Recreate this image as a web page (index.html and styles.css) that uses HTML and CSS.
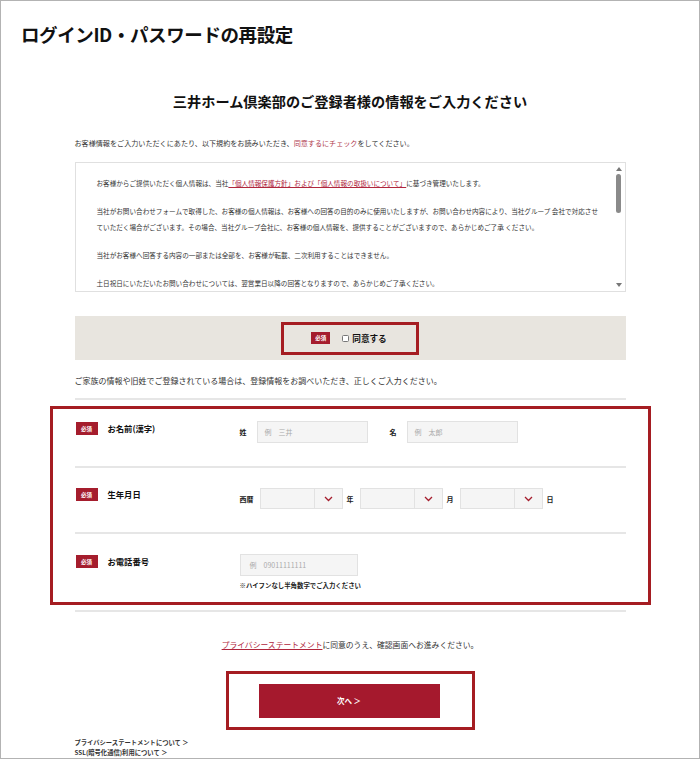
FILE: index.html
```html
<!DOCTYPE html>
<html lang="ja">
<head>
<meta charset="utf-8">
<title>ログインID・パスワードの再設定</title>
<link rel="stylesheet" href="styles.css">
</head>
<body>
<div class="frame">
  <h1 class="page-title">ログインID・パスワードの再設定</h1>
  <div class="content">
    <h2 class="lead">三井ホーム倶楽部のご登録者様の情報をご入力ください</h2>
    <p class="intro">お客様情報をご入力いただくにあたり、以下規約をお読みいただき、<span class="red">同意するにチェック</span>をしてください。</p>

    <div class="terms">
      <div class="terms-text">
        <p>お客様からご提供いただく個人情報は、当社<a class="ul">「個人情報保護方針」および「個人情報の取扱いについて」</a>に基づき管理いたします。</p>
        <p>当社がお問い合わせフォームで取得した、お客様の個人情報は、お客様への回答の目的のみに使用いたしますが、お問い合わせ内容により、当社グループ 会社で対応させていただく場合がございます。その場合、当社グループ会社に、お客様の個人情報を、提供することがございますので、あらかじめご了承 ください。</p>
        <p>当社がお客様へ回答する内容の一部または全部を、お客様が転載、二次利用することはできません。</p>
        <p>土日祝日にいただいたお問い合わせについては、翌営業日以降の回答となりますので、あらかじめご了承ください。</p>
      </div>
      <div class="sbar">
        <span class="arrow up"></span>
        <span class="track"><span class="thumb"></span></span>
        <span class="arrow down"></span>
      </div>
    </div>

    <div class="agree-band">
      <div class="agree-box">
        <span class="badge small">必須</span>
        <label class="agree-label"><span class="check"></span>同意する</label>
      </div>
    </div>

    <p class="family">ご家族の情報や旧姓でご登録されている場合は、登録情報をお調べいただき、正しくご入力ください。</p>
    <div class="rule"></div>

    <div class="form-box">
      <div class="row r1">
        <div class="row-head"><span class="badge">必須</span><span class="row-label">お名前(漢字)</span></div>
        <div class="fields">
          <span class="flabel">姓</span><span class="input w111">例　三井</span>
          <span class="flabel ml22">名</span><span class="input w111">例　太郎</span>
        </div>
      </div>
      <div class="row r2">
        <div class="row-head"><span class="badge">必須</span><span class="row-label">生年月日</span></div>
        <div class="fields">
          <span class="flabel">西暦</span>
          <span class="select"><span class="sel-body"></span><span class="sel-btn"><svg width="9" height="6" viewBox="0 0 9 6"><path d="M1 1 L4.5 4.5 L8 1" fill="none" stroke="#a51d2d" stroke-width="1.3"/></svg></span></span>
          <span class="flabel">年</span>
          <span class="select"><span class="sel-body"></span><span class="sel-btn"><svg width="9" height="6" viewBox="0 0 9 6"><path d="M1 1 L4.5 4.5 L8 1" fill="none" stroke="#a51d2d" stroke-width="1.3"/></svg></span></span>
          <span class="flabel">月</span>
          <span class="select"><span class="sel-body"></span><span class="sel-btn"><svg width="9" height="6" viewBox="0 0 9 6"><path d="M1 1 L4.5 4.5 L8 1" fill="none" stroke="#a51d2d" stroke-width="1.3"/></svg></span></span>
          <span class="flabel">日</span>
        </div>
      </div>
      <div class="row r3">
        <div class="row-head"><span class="badge">必須</span><span class="row-label">お電話番号</span></div>
        <div class="fields col">
          <span class="input w118">例　09011111111</span>
          <span class="note">※ハイフンなし半角数字でご入力ください</span>
        </div>
      </div>
    </div>
    <div class="rule rule2"></div>

    <p class="privacy"><a class="ul">プライバシーステートメント</a>に同意のうえ、確認画面へお進みください。</p>

    <div class="btn-wrap">
      <div class="btn-box"><span class="btn">次へ ＞</span></div>
    </div>

    <ul class="footer-links">
      <li>プライバシーステートメントについて ＞</li>
      <li>SSL(暗号化通信)利用について ＞</li>
    </ul>
  </div>
</div>
</body>
</html>
```

FILE: styles.css
```css
* { box-sizing: border-box; }
html, body { margin: 0; padding: 0; background: #fff; }
body {
  font-family: "Noto Sans CJK JP", "Noto Sans", sans-serif;
  color: #222;
}
.frame {
  width: 700px;
  height: 759px;
  border: 1px solid #b3b3b3;
  overflow: hidden;
}
.page-title {
  margin: 20px 0 0 20px;
  font-size: 18.5px;
  line-height: 26px;
  font-weight: 700;
  color: #111;
  letter-spacing: -0.4px;
}
.content {
  width: 551px;
  margin: 0 auto;
}
.lead {
  margin: 42px 0 0;
  text-align: center;
  font-size: 14.2px;
  line-height: 24px;
  font-weight: 700;
  color: #111;
}
.intro {
  margin: 24px 0 0;
  font-size: 7.1px;
  line-height: 12px;
  color: #333;
}
.red { color: #b03a4e; }
.ul { color: #b0263c; text-decoration: underline; }

.terms {
  margin-top: 13px;
  height: 130px;
  border: 1px solid #e0e0e0;
  display: flex;
  overflow: hidden;
}
.terms-text {
  flex: 1;
  padding: 12px 12px 0 21px;
  font-size: 6.6px;
  line-height: 16px;
  color: #333;
}
.terms-text p { margin: 0 0 12px; }
.sbar {
  width: 10px;
  margin: 2px 1px 2px 0;
  display: flex;
  flex-direction: column;
  align-items: center;
}
.arrow {
  width: 0; height: 0;
  border-left: 3px solid transparent;
  border-right: 3px solid transparent;
}
.arrow.up { border-bottom: 4px solid #777; margin-top: 2px; }
.arrow.down { border-top: 4px solid #777; margin-bottom: 2px; }
.track { flex: 1; width: 8px; padding-top: 3px; display: flex; justify-content: center; }
.thumb { width: 5px; height: 39px; background: #8a8a8a; border-radius: 3px; }

.agree-band {
  margin-top: 24px;
  height: 44px;
  background: #e8e5df;
  display: flex;
  justify-content: center;
  align-items: center;
}
.agree-box {
  width: 138px;
  height: 33px;
  border: 3px solid #a51d22;
  display: flex;
  align-items: center;
  justify-content: center;
  gap: 12px;
  padding-right: 2px;
}
.badge {
  display: inline-flex;
  align-items: center;
  justify-content: center;
  width: 22px;
  height: 13px;
  background: #a51d2d;
  color: #fff;
  font-size: 5.5px;
  font-weight: 700;
  flex: none;
}
.badge.small { width: 19px; height: 12px; }
.agree-label {
  display: inline-flex;
  align-items: center;
  font-size: 8.6px;
  font-weight: 700;
  color: #111;
}
.check {
  width: 7px; height: 7px;
  border: 1px solid #777;
  border-radius: 1.5px;
  background: #fff;
  margin-right: 3px;
}
.family {
  margin: 13px 0 0;
  font-size: 8px;
  line-height: 15px;
  color: #333;
}
.rule { height: 2px; background: #e6e6e6; margin-top: 10px; }
.form-box {
  margin: 6px -25px 0;
  border: 3px solid #a51d22;
  padding: 0 22px;
  height: 199px;
}
.row { display: flex; align-items: flex-start; }
.row + .row { border-top: 2px solid #e6e6e6; }
.r1 { height: 57px; padding-top: 12px; }
.r2 { height: 66px; padding-top: 20px; }
.r3 { height: 70px; padding-top: 20px; }
.row-head {
  width: 165px;
  display: flex;
  align-items: center;
  padding-left: 1px;
  margin-top: 1px;
}
.r2 .row-head { margin-top: 0; }
.row-label {
  margin-left: 10px;
  font-size: 8.3px;
  font-weight: 700;
  color: #111;
  margin-top: -1px;
}
.fields {
  display: flex;
  align-items: center;
}
.fields.col { flex-direction: column; align-items: flex-start; }
.flabel {
  font-size: 7px;
  font-weight: 700;
  color: #222;
  margin-right: 10px;
}
.ml22 { margin-left: 22px; }
.input {
  height: 22px;
  background: #f5f5f5;
  border: 1px solid #e2e2e2;
  font-size: 7px;
  color: #aaa;
  display: flex;
  align-items: center;
  padding-left: 7px;
}
.w111 { width: 111px; }
.w118 { width: 118px; padding-left: 9px; font-size: 7px; }
.select {
  display: flex;
  width: 83px;
  height: 21px;
  border: 1px solid #e2e2e2;
  background: #f5f5f5;
  margin: 0 4px 0 6px;
}
.r2 .flabel { margin-right: 0; }
.sel-body { flex: 1; }
.sel-btn {
  width: 28px;
  border-left: 1px solid #e2e2e2;
  display: flex;
  align-items: center;
  justify-content: center;
}
.note {
  margin-top: 5px;
  font-size: 6.4px;
  color: #222;
  font-weight: 700;
}
.rule2 { margin-top: 5px; }
.privacy {
  margin: 26px 0 0;
  text-align: center;
  font-size: 7.8px;
  line-height: 14px;
  color: #333;
}
.btn-wrap { display: flex; justify-content: center; margin-top: 19px; }
.btn-box {
  width: 249px;
  height: 59px;
  border: 3px solid #a51d22;
  display: flex;
  align-items: center;
  justify-content: center;
  padding-right: 2px;
}
.btn {
  width: 181px;
  height: 34px;
  background: #a5192d;
  color: #fff;
  font-size: 7.5px;
  font-weight: 700;
  display: flex;
  align-items: center;
  justify-content: center;
}
.footer-links {
  list-style: none;
  margin: 8px 0 0;
  padding: 0;
  font-size: 6.3px;
  line-height: 10px;
  color: #333;
  font-weight: 700;
}
```
